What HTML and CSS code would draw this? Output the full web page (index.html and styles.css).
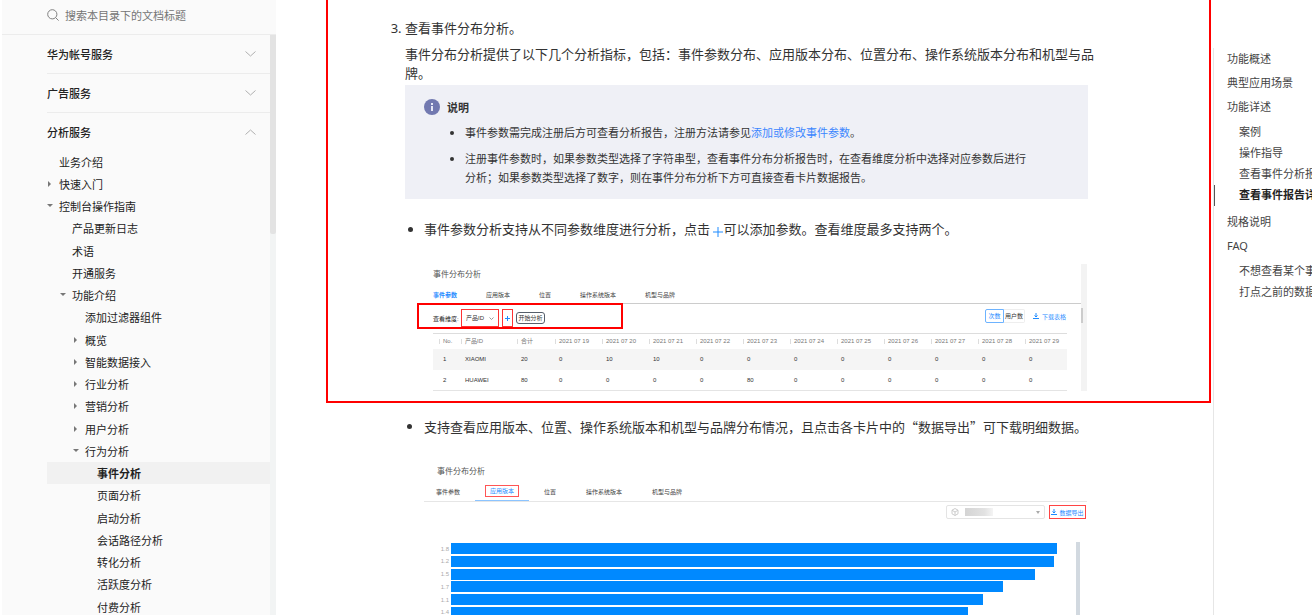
FILE: index.html
```html
<!DOCTYPE html>
<html lang="zh-CN">
<head>
<meta charset="utf-8">
<title>事件分析</title>
<link rel="stylesheet" href="styles.css">
</head>
<body>
<aside class="sidebar">
  <div class="search">
    <svg class="search-icon" viewBox="0 0 12 12" fill="none" stroke="#808080"><circle cx="5.3" cy="5.3" r="4.6"/><path d="M8.6 8.6l3 3"/></svg>
    <input class="search-input" type="text" aria-label="搜索本目录下的文档标题" placeholder="搜索本目录下的文档标题">
  </div>
  <div class="sidebar-body">
    <nav class="tree">
      <button class="group" type="button">华为帐号服务<svg class="chev" viewBox="0 0 11 6"><path d="M.5.5l5 4.5 5-4.5"/></svg></button>
      <button class="group" type="button">广告服务<svg class="chev" viewBox="0 0 11 6"><path d="M.5.5l5 4.5 5-4.5"/></svg></button>
      <button class="group last" type="button">分析服务<svg class="chev" viewBox="0 0 11 6"><path d="M.5 5.5l5-4.5 5 4.5"/></svg></button>
      <ul class="tree-list">
        <li><a class="l1" href="#">业务介绍</a></li>
        <li><a class="l1 closed" href="#">快速入门</a></li>
        <li><a class="l1 open" href="#">控制台操作指南</a></li>
        <li><a class="l2" href="#">产品更新日志</a></li>
        <li><a class="l2" href="#">术语</a></li>
        <li><a class="l2" href="#">开通服务</a></li>
        <li><a class="l2 open" href="#">功能介绍</a></li>
        <li><a class="l3" href="#">添加过滤器组件</a></li>
        <li><a class="l3 closed" href="#">概览</a></li>
        <li><a class="l3 closed" href="#">智能数据接入</a></li>
        <li><a class="l3 closed" href="#">行业分析</a></li>
        <li><a class="l3 closed" href="#">营销分析</a></li>
        <li><a class="l3 closed" href="#">用户分析</a></li>
        <li><a class="l3 open" href="#">行为分析</a></li>
        <li><a class="l4 current" href="#">事件分析</a></li>
        <li><a class="l4" href="#">页面分析</a></li>
        <li><a class="l4" href="#">启动分析</a></li>
        <li><a class="l4" href="#">会话路径分析</a></li>
        <li><a class="l4" href="#">转化分析</a></li>
        <li><a class="l4" href="#">活跃度分析</a></li>
        <li><a class="l4" href="#">付费分析</a></li>
      </ul>
    </nav>
    <div class="rail"><div class="rail-thumb"></div></div>
  </div>
</aside>

<main class="doc">
  <section class="block marked">
    <ol class="steps" start="3">
      <li>
        <p class="step-title">查看事件分布分析。</p>
        <p class="step-text">事件分布分析提供了以下几个分析指标，包括：事件参数分布、应用版本分布、位置分布、操作系统版本分布和机型与品牌。</p>
      </li>
    </ol>
    <div class="note">
      <div class="note-head">
        <svg class="note-icon" viewBox="0 0 16 16"><circle cx="8" cy="8" r="8" fill="#7279b0"/><path d="M7 4h2v2H7zM7 7h2v5H7z" fill="#e6e8f6"/></svg>
        <strong>说明</strong>
      </div>
      <ul class="note-list">
        <li>事件参数需完成注册后方可查看分析报告，注册方法请参见<a class="link" href="#">添加或修改事件参数</a>。</li>
        <li>注册事件参数时，如果参数类型选择了字符串型，查看事件分布分析报告时，在查看维度分析中选择对应参数后进行分析；如果参数类型选择了数字，则在事件分布分析下方可直接查看卡片数据报告。</li>
      </ul>
    </div>
    <ul class="points">
      <li>事件参数分析支持从不同参数维度进行分析，点击 <svg class="plus" viewBox="0 0 10 10"><path d="M5 0v10M0 5h10"/></svg>可以添加参数。查看维度最多支持两个。</li>
    </ul>
    <div class="shot shot-table">
      <div class="shot-main">
        <h4 class="shot-title">事件分布分析</h4>
        <div class="tabs">
          <button class="tab active" type="button">事件参数</button>
          <button class="tab" type="button">应用版本</button>
          <button class="tab" type="button">位置</button>
          <button class="tab" type="button">操作系统版本</button>
          <button class="tab" type="button">机型与品牌</button>
        </div>
        <div class="toolbar">
          <div class="query">
            <label class="query-label" for="dim">查看维度:</label>
            <span class="red-box select-box"><select id="dim" class="mini-select"><option>产品ID</option></select><svg class="mini-arrow" viewBox="0 0 5 3"><path d="M.5.5l2 2 2-2"/></svg></span>
            <button class="red-box add" type="button" aria-label="添加"><svg viewBox="0 0 5 5"><path d="M2.5 0v5M0 2.5h5"/></svg></button>
            <button class="start" type="button">开始分析</button>
          </div>
          <div class="tools">
            <button class="seg on" type="button">次数</button><button class="seg" type="button">用户数</button>
            <a class="export" href="#"><svg class="dl" viewBox="0 0 6 6"><path d="M3 0v4M1.500 2.500L3 4l1.500-1.500M0 5.500h6"/></svg>下载表格</a>
          </div>
        </div>
        <table class="data">
          <colgroup><col class="c-no"><col class="c-id"><col class="c-sum"><col class="c-day" span="10"><col></colgroup>
          <thead><tr><th>No.</th><th>产品ID</th><th>合计</th><th>2021 07 19</th><th>2021 07 20</th><th>2021 07 21</th><th>2021 07 22</th><th>2021 07 23</th><th>2021 07 24</th><th>2021 07 25</th><th>2021 07 26</th><th>2021 07 27</th><th>2021 07 28</th><th>2021 07 29</th></tr></thead>
          <tbody>
            <tr><td>1</td><td>XIAOMI</td><td>20</td><td>0</td><td>10</td><td>10</td><td>0</td><td>0</td><td>0</td><td>0</td><td>0</td><td>0</td><td>0</td><td>0</td></tr>
            <tr><td>2</td><td>HUAWEI</td><td>80</td><td>0</td><td>0</td><td>0</td><td>0</td><td>80</td><td>0</td><td>0</td><td>0</td><td>0</td><td>0</td><td>0</td></tr>
          </tbody>
        </table>
      </div>
      <div class="shot-rail"><div class="shot-thumb"></div></div>
    </div>
  </section>

  <section class="block">
    <ul class="points second">
      <li>支持查看应用版本、位置、操作系统版本和机型与品牌分布情况，且点击各卡片中的“数据导出”可下载明细数据。</li>
    </ul>
    <div class="shot-chart">
      <h4 class="shot-title">事件分布分析</h4>
      <div class="tabs chart-tabs">
        <button class="tab" type="button">事件参数</button>
        <button class="tab picked" type="button"><span class="pick">应用版本</span></button>
        <button class="tab" type="button">位置</button>
        <button class="tab" type="button">操作系统版本</button>
        <button class="tab" type="button">机型与品牌</button>
      </div>
      <div class="chart-tools">
        <button class="picker" type="button" aria-label="应用"><svg class="cube" viewBox="0 0 8 8"><path d="M4 .5l3 1.700v3.600L4 7.500 1 5.800V2.200zM1 2.200l3 1.800 3-1.800M4 4v3.500"/></svg><span class="mask"></span><svg class="caret" viewBox="0 0 4 3"><path d="M0 0h4L2 3z"/></svg></button>
        <a class="export boxed" href="#"><svg class="dl" viewBox="0 0 6 6"><path d="M3 0v4M1.500 2.500L3 4l1.500-1.500M0 5.500h6"/></svg>数据导出</a>
      </div>
      <div class="chart">
        <div class="bars">
          <div class="bar-row"><span class="axis">1.8</span><div class="track"><div class="bar" style="width:98%"></div></div></div>
          <div class="bar-row"><span class="axis">1.2</span><div class="track"><div class="bar" style="width:97.600%"></div></div></div>
          <div class="bar-row"><span class="axis">1.5</span><div class="track"><div class="bar" style="width:94.500%"></div></div></div>
          <div class="bar-row"><span class="axis">1.7</span><div class="track"><div class="bar" style="width:89.300%"></div></div></div>
          <div class="bar-row"><span class="axis">1.1</span><div class="track"><div class="bar" style="width:86.100%"></div></div></div>
          <div class="bar-row"><span class="axis">1.4</span><div class="track"><div class="bar" style="width:83.700%"></div></div></div>
        </div>
        <div class="chart-rail"></div>
      </div>
    </div>
  </section>
</main>

<nav class="toc">
  <a class="t1" href="#">功能概述</a>
  <a class="t1" href="#">典型应用场景</a>
  <a class="t1" href="#">功能详述</a>
  <div class="sub">
    <a class="t2" href="#">案例</a>
    <a class="t2" href="#">操作指导</a>
    <a class="t2" href="#">查看事件分析报</a>
    <a class="t2 here" href="#">查看事件报告详</a>
  </div>
  <a class="t1" href="#">规格说明</a>
  <a class="t1" href="#">FAQ</a>
  <div class="sub">
    <a class="t2" href="#">不想查看某个事</a>
    <a class="t2" href="#">打点之前的数据</a>
  </div>
</nav>
</body>
</html>
```

FILE: styles.css
```css
* { box-sizing: border-box; }
body {
  margin: 0;
  height: 100vh;
  overflow: hidden;
  display: flex;
  background: #fff;
  color: #333;
  font-family: "Noto Sans", "Noto Sans CJK SC", sans-serif;
  font-size: 13px;
}
a { color: inherit; text-decoration: none; }
button, input, select { font-family: inherit; color: inherit; margin: 0; padding: 0; border: 0; background: none; }
ul, ol, p, h4 { margin: 0; padding: 0; }
svg { fill: none; flex: none; }

/* left navigation */
.sidebar {
  flex: none;
  width: 276px;
  display: flex;
  flex-direction: column;
  background: #fafafa;
  border-left: 2px solid #fff;
  font-size: 11px;
}
.search {
  flex: none;
  height: 35px;
  padding: 0 20px 4px 45px;
  display: flex;
  align-items: center;
  gap: 6px;
  border-bottom: 1px solid #ececec;
}
.search-icon { width: 12px; height: 12px; }
.search-input { flex: 1; min-width: 0; font-size: 11px; outline: 0; }
.search-input::placeholder { color: #757575; opacity: 1; }
.sidebar-body { flex: 1; min-height: 0; display: flex; }
.tree { flex: 1; padding-left: 45px; }
.group {
  width: 100%;
  height: 39px;
  padding: 0 14px 1px 0;
  display: flex;
  align-items: center;
  justify-content: space-between;
  border-bottom: 1px solid #ececec;
  font-size: 11px;
  font-weight: 500;
  color: #222;
}
.group.last { height: 38px; border-bottom: 0; }
.chev { width: 11px; height: 6px; stroke: #b0b0b0; }
.tree-list { list-style: none; }
.tree-list li:nth-child(4n) { margin-bottom: 1px; }
.tree-list a { display: flex; align-items: center; height: 22px; color: #222; }
.tree-list a::before { content: ""; flex: none; width: 12px; height: 6px; }
.closed::before { clip-path: polygon(1px 0, 4px 3px, 1px 6px); background: #777; }
.open::before { clip-path: polygon(0 1px, 6px 1px, 3px 4px); background: #777; }
.l2 { padding-left: 13px; }
.l3 { padding-left: 26px; }
.l4 { padding-left: 38px; }
.tree-list .current { background: #f1f1f1; font-weight: 700; }
.rail { width: 6px; background: #f2f4f4; }
.rail-thumb { height: 199px; background: #e3e3e3; border-radius: 0 0 2px 2px; }

/* article */
.doc { flex: 1; min-width: 0; }
.block {
  margin: 0 2px 0 50px;
  padding: 0 111px 0 77px;
  border: solid transparent;
  border-width: 0 2px;
}
.marked { border-color: #f00; border-bottom: 2px solid #f00; padding-top: 19px; padding-bottom: 10px; }
.step-title { line-height: 19px; margin-bottom: 7px; }
.step-text { line-height: 19px; margin-bottom: 2px; }
.note {
  margin-right: 10px;
  padding: 13px 58px 12px 19px;
  background: #eff0f6;
  font-size: 11px;
}
.note-head { display: flex; align-items: center; gap: 7px; height: 18px; }
.note-icon { width: 16px; height: 16px; }
.note-list { padding-left: 41px; line-height: 19px; }
.note-list li { margin-top: 7px; }
.link { color: #3b86ff; }
.points { padding: 20px 0 0 19px; line-height: 20px; }
.plus { width: 10px; height: 10px; vertical-align: -3px; stroke: #1f8bff; }
.second { padding-top: 14px; font-family: "Noto Sans CJK SC", sans-serif; }

/* product panels */
.shot, .shot-chart { font-family: "Liberation Sans", "Noto Sans CJK SC", sans-serif; font-size: 6px; }
.shot { display: flex; margin: 25px 11px 0 19px; }
.shot-main { flex: 1; min-width: 0; padding-left: 9px; }
.shot-title { font-size: 8px; line-height: 12px; font-weight: 400; color: #555; }
.shot-table .shot-title { margin-top: 5px; }
.tabs { display: flex; height: 23px; padding-top: 6px; align-items: center; gap: 29px; border-bottom: 1px solid #ccc; }
.tab { font-size: 6px; line-height: 8px; color: #444; }
.tab.active { color: #1f8bff; font-weight: 700; }
.toolbar { display: flex; justify-content: space-between; margin-top: -1px; height: 30px; }
.query {
  width: 206px;
  height: 26px;
  margin-left: -16px;
  padding: 4px 14px 0;
  display: flex;
  align-items: center;
  gap: 3px;
  border: 2px solid #f00;
}
.query-label { width: 25px; white-space: nowrap; color: #222; }
.red-box { border: 1px solid #f33; height: 18px; }
.select-box { width: 38px; display: flex; align-items: center; padding: 0 4px; }
.mini-select { flex: 1; min-width: 0; appearance: none; font-size: 6px; outline: 0; }
.mini-arrow { width: 5px; height: 3px; stroke: #999; stroke-width: 1px; }
.add { width: 11px; display: flex; align-items: center; justify-content: center; }
.add svg { width: 5px; height: 5px; stroke: #1f8bff; }
.start { width: 29px; height: 12px; border: 1px solid #555e6b; border-radius: 3px; font-size: 6px; line-height: 8px; }
.tools { display: flex; align-items: flex-start; padding-top: 6px; margin-right: 15px; }
.seg { width: 21px; height: 14px; font-size: 6px; line-height: 8px; border: 1px solid #eee; border-left: 0; border-radius: 0 2px 2px 0; }
.seg.on { width: 19px; color: #1f8bff; border: 1px solid #6db3ff; border-radius: 2px 0 0 2px; }
.export { display: flex; align-items: center; gap: 3px; height: 14px; margin-left: 8px; color: #1f8bff; }
.dl { width: 6px; height: 6px; stroke: #1f8bff; stroke-width: 1px; }
.data { width: calc(100% - 14px); table-layout: fixed; border-collapse: collapse; border-top: 1px solid #ddd; border-bottom: 1px solid #e4e4e4; }
.c-no { width: 28px; }
.c-id { width: 56px; }
.c-sum { width: 38px; }
.c-day { width: 47px; }
.data th, .data td { padding: 0 0 0 4px; text-align: left; font-weight: 400; white-space: nowrap; line-height: 8px; }
.data th { height: 15px; color: #777; background: linear-gradient(#ddd, #ddd) left center / 1px 5px no-repeat; }
.data td { height: 21px; color: #333; }
.data th:first-child, .data td:first-child { padding-left: 10px; }
.data th:first-child { background-position: 6px center; }
.data tbody tr:first-child { background: #f5f5f5; }
.shot-rail { width: 6px; background: #f3f3f3; }
.shot-thumb { width: 2px; height: 15px; margin-top: 44px; background: #ccc; }

.shot-chart { margin: 29px 11px 0 19px; }
.shot-chart .shot-title { padding-left: 13px; }
.chart-tabs { height: 24px; padding: 4px 0 0 12px; gap: 0; border-color: #e6e6e6; align-items: stretch; }
.chart-tabs .tab { margin-right: 30px; }
.chart-tabs .picked { width: 54px; margin: 0 15px 0 -15px; border-bottom: 1px solid #8cc4ff; color: #1f8bff; }
.pick { display: inline-block; padding: 1px 4px; border: 1px solid #f55; }
.chart-tools { display: flex; justify-content: flex-end; align-items: center; gap: 4px; padding: 0 1px 0 0; height: 20px; }
.picker { width: 99px; height: 14px; padding: 0 4px; display: flex; align-items: center; gap: 6px; border: 1px solid #e4e4e4; border-radius: 2px; }
.cube { width: 8px; height: 8px; stroke: #ccc; stroke-width: 1px; }
.mask { width: 28px; height: 8px; background: linear-gradient(90deg, #d4d4d4, #e2e2e2 70%, #f4f4f4); }
.caret { width: 4px; height: 3px; margin-left: auto; fill: #aaa; }
.boxed { width: 37px; margin: 0; justify-content: center; gap: 2px; border: 1px solid #f44; }
.chart { display: flex; justify-content: space-between; margin-top: 20px; padding: 0 7px 0 15px; }
.bars { flex: 1; height: 75px; margin-top: 1px; margin-right: 7px; display: flex; flex-direction: column; justify-content: space-between; }
.bar-row { display: flex; align-items: center; gap: 2px; }
.axis { width: 10px; text-align: right; line-height: 8px; color: #aaa; }
.track { flex: 1; }
.bar { height: 11px; background: #0089ff; }
.chart-rail { width: 4px; background: #d2d9e0; }

/* page contents */
.toc {
  flex: none;
  width: 99px;
  margin-top: 48px;
  padding-left: 13px;
  border-left: 1px solid #e6e6e6;
  overflow: hidden;
  white-space: nowrap;
  font-size: 11px;
  color: #444;
}
.toc a { display: block; }
.toc .t1 { height: 24px; line-height: 22px; }
.sub { padding: 2px 0 5px; margin-left: -13px; }
.toc .t2 { height: 21px; line-height: 20px; padding-left: 25px; }
.toc .here { font-weight: 700; color: #222; border-left: 1px solid #555; padding-left: 24px; }
```
